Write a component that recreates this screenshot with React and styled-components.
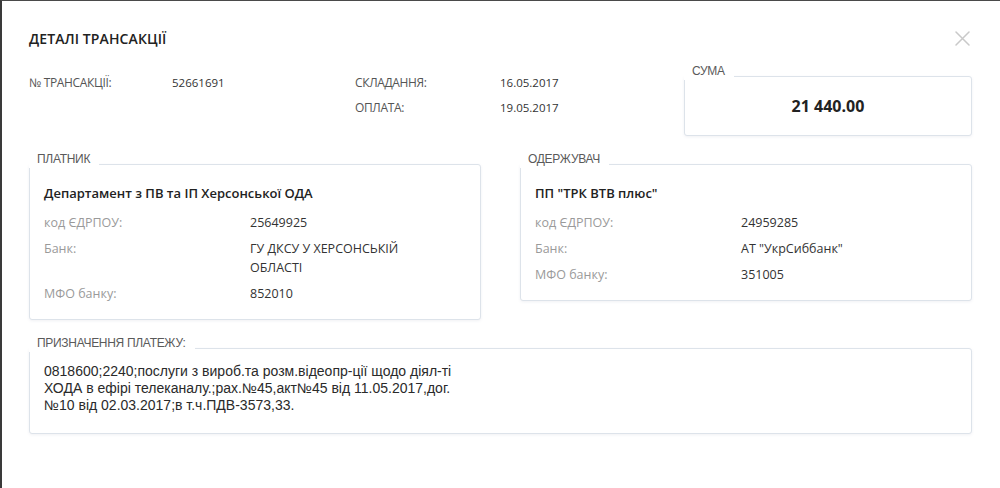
import React from 'react';
import styled, { createGlobalStyle } from 'styled-components';

const GlobalStyle = createGlobalStyle`
  html, body {
    margin: 0;
    padding: 0;
    background: #fff;
  }
  body {
    font-family: "Open Sans", "Liberation Sans", sans-serif;
  }
`;

const Frame = styled.div`
  box-sizing: border-box;
  width: 1000px;
  height: 488px;
  overflow: hidden;
  border-left: 2px solid #3a3a3a;
  border-top: 1px solid #4a4a4a;
  background: #fff;
  padding: 24px 28px 0 27px;
`;

const Header = styled.div`
  display: flex;
  align-items: center;
  justify-content: space-between;
  height: 26px;
`;

const Title = styled.h1`
  margin: 0;
  font-size: 14px;
  font-weight: 600;
  color: #222;
  letter-spacing: 0.1px;
`;

const CloseButton = styled.button`
  border: 0;
  background: none;
  padding: 0;
  margin-right: 2px;
  width: 16px;
  height: 16px;
  display: flex;
  align-items: center;
  justify-content: center;
  cursor: pointer;
`;

const InfoSection = styled.div`
  display: grid;
  grid-template-columns: 326px 329px 1fr;
  margin-top: 13px;
`;

const InfoGrid = styled.div`
  display: grid;
  grid-template-columns: ${p => p.labelWidth}px 1fr;
  grid-auto-rows: 25px;
  align-items: center;
  padding-top: 6px;
  align-self: start;
`;

const InfoLabel = styled.span`
  font-size: 12px;
  color: #555;
  text-transform: uppercase;
  letter-spacing: -0.35px;
`;

const InfoValue = styled.span`
  font-size: 11.5px;
  color: #333;
  font-weight: 500;
`;

const Fieldset = styled.div`
  position: relative;
  box-sizing: border-box;
  border: 1px solid #dde3ea;
  border-radius: 3px;
  box-shadow: 0 1px 3px rgba(60, 80, 110, 0.08);
  background: #fff;
`;

const Legend = styled.span`
  position: absolute;
  top: -12px;
  left: -1px;
  padding: 0 9px 3px 8px;
  background: #fff;
  font-family: "Liberation Sans", Arial, sans-serif;
  font-size: 12px;
  line-height: 12px;
  color: #5a5a5a;
  letter-spacing: -0.3px;
  white-space: nowrap;
`;

const SumBox = styled(Fieldset)`
  margin-top: 12px;
  height: 60px;
  display: flex;
  align-items: center;
  justify-content: center;
`;

const SumValue = styled.span`
  font-size: 16px;
  font-weight: 700;
  color: #222;
`;

const Parties = styled.div`
  display: grid;
  grid-template-columns: 1fr 1fr;
  column-gap: 39px;
  align-items: start;
  margin-top: 28px;
`;

const PartyBox = styled(Fieldset)`
  padding: 18px 14px 16px 14px;
`;

const PartyName = styled.div`
  font-size: 13px;
  font-weight: 600;
  color: #222;
  line-height: 20px;
  margin-bottom: 10px;
`;

const PartyRows = styled.div`
  display: grid;
  grid-template-columns: 206px 200px;
  row-gap: 7px;
  line-height: 19px;
  font-size: 12.5px;
`;

const PartyLabel = styled.span`
  color: #9a9a9a;
`;

const PartyValue = styled.span`
  color: #333;
`;

const PurposeBox = styled(Fieldset)`
  margin-top: 28px;
  height: 86px;
  padding: 14px 14px 0 14px;
`;

const PurposeText = styled.p`
  margin: 0;
  width: 436px;
  font-family: "Liberation Sans", Arial, sans-serif;
  font-size: 14px;
  line-height: 17px;
  color: #2a2a2a;
`;

const CloseIcon = () => (
  <svg width="15" height="15" viewBox="0 0 15 15" fill="none">
    <path d="M1 1L14 14M14 1L1 14" stroke="#c9c9c9" strokeWidth="1.5" strokeLinecap="round" />
  </svg>
);

const parties = [
  {
    legend: 'ПЛАТНИК',
    name: 'Департамент з ПВ та ІП Херсонської ОДА',
    code: '25649925',
    bank: 'ГУ ДКСУ У ХЕРСОНСЬКІЙ ОБЛАСТІ',
    mfo: '852010',
  },
  {
    legend: 'ОДЕРЖУВАЧ',
    name: 'ПП "ТРК ВТВ плюс"',
    code: '24959285',
    bank: 'АТ "УкрСиббанк"',
    mfo: '351005',
  },
];

export default function App() {
  return (
    <Frame>
      <GlobalStyle />
      <Header>
        <Title>ДЕТАЛІ ТРАНСАКЦІЇ</Title>
        <CloseButton aria-label="Закрити"><CloseIcon /></CloseButton>
      </Header>

      <InfoSection>
        <InfoGrid labelWidth={143}>
          <InfoLabel>№ Трансакції:</InfoLabel>
          <InfoValue>52661691</InfoValue>
        </InfoGrid>
        <InfoGrid labelWidth={145}>
          <InfoLabel>Складання:</InfoLabel>
          <InfoValue>16.05.2017</InfoValue>
          <InfoLabel>Оплата:</InfoLabel>
          <InfoValue>19.05.2017</InfoValue>
        </InfoGrid>
        <SumBox>
          <Legend>СУМА</Legend>
          <SumValue>21 440.00</SumValue>
        </SumBox>
      </InfoSection>

      <Parties>
        {parties.map(p => (
          <PartyBox key={p.legend}>
            <Legend>{p.legend}</Legend>
            <PartyName>{p.name}</PartyName>
            <PartyRows>
              <PartyLabel>код ЄДРПОУ:</PartyLabel>
              <PartyValue>{p.code}</PartyValue>
              <PartyLabel>Банк:</PartyLabel>
              <PartyValue>{p.bank}</PartyValue>
              <PartyLabel>МФО банку:</PartyLabel>
              <PartyValue>{p.mfo}</PartyValue>
            </PartyRows>
          </PartyBox>
        ))}
      </Parties>

      <PurposeBox>
        <Legend>ПРИЗНАЧЕННЯ ПЛАТЕЖУ:</Legend>
        <PurposeText>
          0818600;2240;послуги з вироб.та розм.відеопр-ції щодо діял-ті ХОДА в ефірі телеканалу.;рах.№45,акт№45 від 11.05.2017,дог.№10 від 02.03.2017;в т.ч.ПДВ-3573,33.
        </PurposeText>
      </PurposeBox>
    </Frame>
  );
}
